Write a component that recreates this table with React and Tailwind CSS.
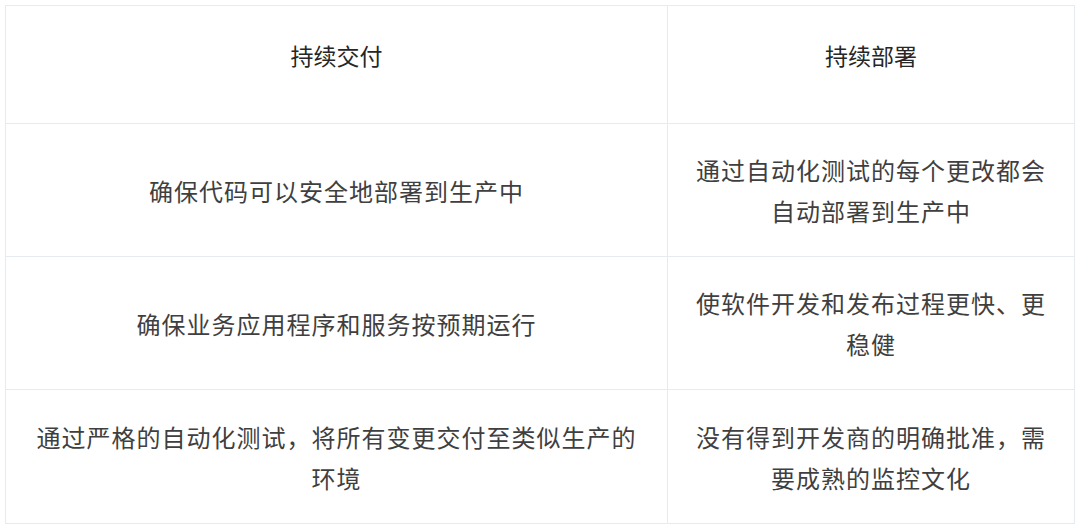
import React from 'react';

const rows = [
  ['确保代码可以安全地部署到生产中', '通过自动化测试的每个更改都会自动部署到生产中'],
  ['确保业务应用程序和服务按预期运行', '使软件开发和发布过程更快、更稳健'],
  ['通过严格的自动化测试，将所有变更交付至类似生产的环境', '没有得到开发商的明确批准，需要成熟的监控文化'],
];

const font = { fontFamily: '"Noto Sans CJK SC", "Noto Sans", sans-serif' };

export default function App() {
  return (
    <div className="w-[1080px] h-[529px] bg-white pt-[5px] pl-[5px]" style={font}>
      <div className="w-[1070px] border border-[#e6ebf0] grid grid-cols-[662px_1fr]">
        {/* Header */}
        <div className="h-[118px] border-b border-r border-[#e6ebf0] flex justify-center pt-[29px] text-[23px] leading-[41px] text-[#262626]">
          持续交付
        </div>
        <div className="h-[118px] border-b border-[#e6ebf0] flex justify-center pt-[29px] text-[23px] leading-[41px] text-[#262626]">
          持续部署
        </div>

        {rows.map((r, i) => (
          <React.Fragment key={i}>
            <div className={`h-[133px] border-r border-[#e6ebf0] flex items-center justify-center px-[30px] text-center text-[24px] leading-[41px] tracking-[1px] text-[#3f3f3f] ${i < rows.length - 1 ? 'border-b' : ''}`}>
              {r[0]}
            </div>
            <div className={`h-[133px] border-[#e6ebf0] flex items-center justify-center px-[26px] text-center text-[24px] leading-[41px] tracking-[1px] text-[#3f3f3f] ${i < rows.length - 1 ? 'border-b' : ''}`}>
              {r[1]}
            </div>
          </React.Fragment>
        ))}
      </div>
    </div>
  );
}
